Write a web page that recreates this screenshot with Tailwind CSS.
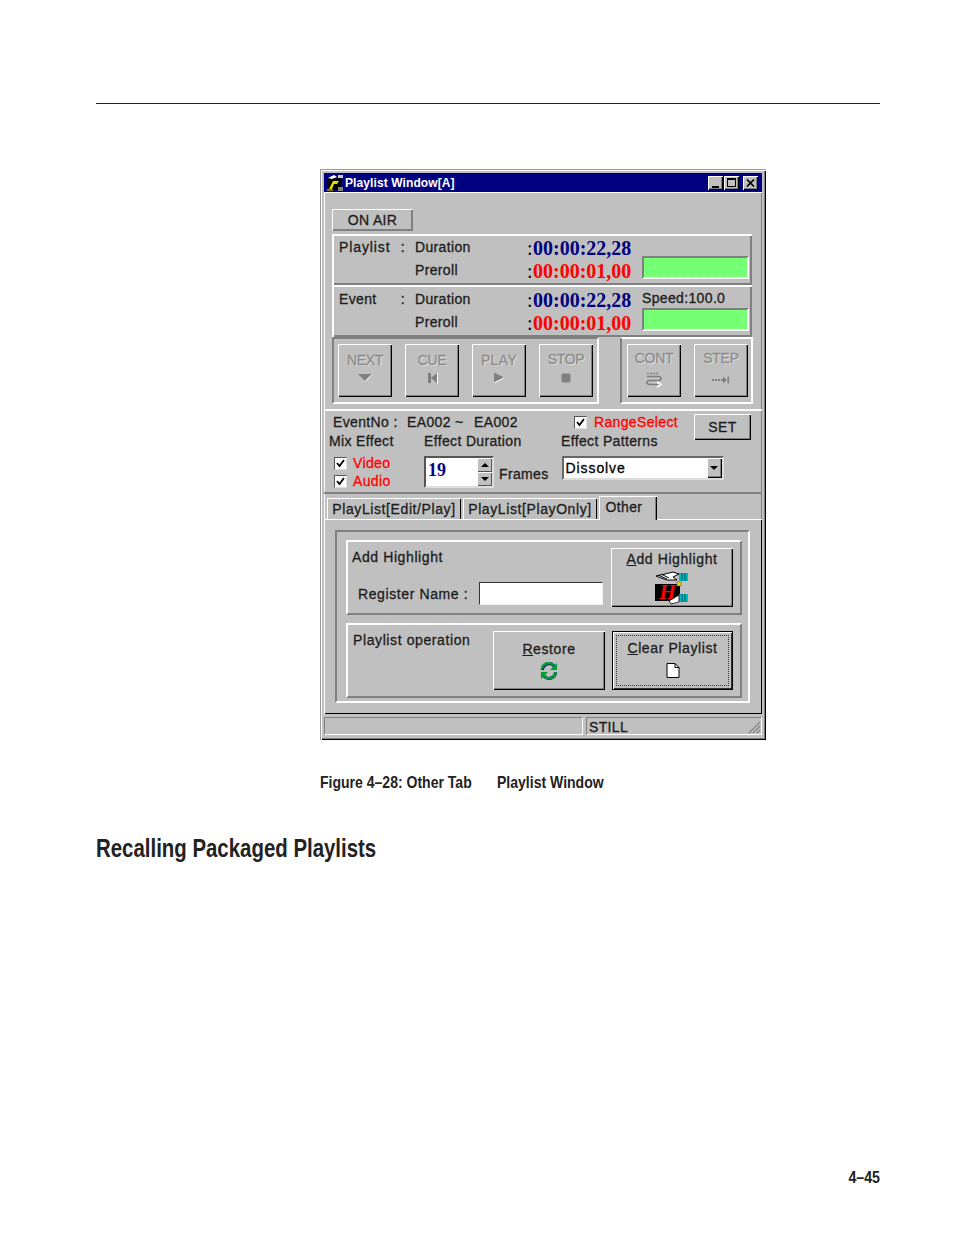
<!DOCTYPE html>
<html lang="en">
<head>
  <meta charset="UTF-8">
  <title>Playlist Window</title>
  <script src="https://cdn.jsdelivr.net/npm/@tailwindcss/browser@4"></script>
</head>
<body class="bg-white">
<div class="w-[954px] h-[1235px] bg-white flex flex-col font-['Liberation_Sans',sans-serif] text-black overflow-hidden">
  <div class="ml-[96px] mt-[103px] w-[784px] h-px bg-[#222]"></div>

  <!-- window -->
  <div class="ml-[320px] mt-[65px] w-[446px] h-[571px] p-[4px] flex flex-col bg-[#c0c0c0] text-[14px] leading-none tracking-[0.35px] text-[#1c1c1c] [-webkit-text-stroke:0.3px] shadow-[inset_1px_1px_0_#999,inset_2px_2px_0_#fff,inset_-1px_-1px_0_#000,inset_-2px_-2px_0_#808080]">
    <!-- title bar -->
    <div class="h-[19px] shrink-0 bg-[#000080] flex items-center pl-[2px] pr-[4px] text-white">
      <svg width="18" height="18" viewBox="0 0 18 18" class="shrink-0">
        <rect x="1" y="4" width="14" height="12" fill="#000"/>
        <path d="M3 15 L7 7 L13 7 L11 10 L8 10 L6 15Z" fill="#e8d800"/>
        <path d="M2 4 L8 1 L11 3 L6 5Z" fill="#fff"/>
        <rect x="12" y="1" width="5" height="3" fill="#d0d0d0"/>
        <rect x="12" y="13" width="5" height="4" fill="#808080"/>
        <rect x="1" y="15" width="6" height="2" fill="#808000"/>
      </svg>
      <span class="ml-[1px] text-[12px] font-bold tracking-[0.1px] [-webkit-text-stroke:0]">Playlist Window[A]</span>
      <div class="ml-auto flex items-center">
        <div class="mr-[1px] w-[15px] h-[14px] bg-[#c0c0c0] flex items-end justify-center pb-[2px] shadow-[inset_1px_1px_0_#fff,inset_-1px_-1px_0_#000,inset_-2px_-2px_0_#808080]"><div class="w-[7px] h-[2px] bg-black"></div></div>
        <div class="w-[15px] h-[14px] bg-[#c0c0c0] flex items-center justify-center shadow-[inset_1px_1px_0_#fff,inset_-1px_-1px_0_#000,inset_-2px_-2px_0_#808080]"><div class="w-[9px] h-[9px] border border-black border-t-2"></div></div>
        <div class="ml-[4px] w-[15px] h-[14px] bg-[#c0c0c0] flex items-center justify-center shadow-[inset_1px_1px_0_#fff,inset_-1px_-1px_0_#000,inset_-2px_-2px_0_#808080]">
          <svg width="9" height="8" viewBox="0 0 9 8"><path d="M1 0.5 L8 7.5 M8 0.5 L1 7.5" stroke="#000" stroke-width="1.7"/></svg>
        </div>
      </div>
    </div>

    <!-- client area -->
    <div class="h-[522px] shrink-0 flex flex-col shadow-[inset_1px_1px_0_#fff,inset_-1px_0_0_#808080]">
      <div class="px-[8px] pt-[17px] flex flex-col">
        <div class="w-[81px] h-[22px] flex items-center justify-center shadow-[inset_1px_1px_0_#fff,inset_-1px_-1px_0_#808080,inset_-2px_-2px_0_#808080]">ON AIR</div>

        <!-- playlist times -->
        <div class="mt-[3px] w-[420px] h-[51px] pl-[5px] grid grid-cols-[76px_112px_115px_1fr] grid-rows-[22px_23px] items-center border-t-2 border-l-2 border-t-white border-l-white shadow-[inset_-2px_-2px_0_#808080]">
          <div class="flex justify-between pr-[10px]"><span class="tracking-[0.9px]">Playlist</span><span>:</span></div>
          <span>Duration</span>
          <span class="pt-[2px] font-['Liberation_Serif',serif] font-bold text-[20px] tracking-normal [-webkit-text-stroke:0] flex"><span class="w-[6px] text-black font-normal">:</span><span class="text-[#000080]">00:00:22,28</span></span>
          <div class="row-span-2 self-stretch flex flex-col justify-end pb-[2px] pr-[3px]">
            <div class="h-[23px] bg-[repeating-conic-gradient(#90ff90_0_25%,#6cfc6c_0_50%)] bg-[length:2px_2px] border-2 border-t-[#808080] border-l-[#808080] border-r-white border-b-white"></div>
          </div>
          <span></span>
          <span>Preroll</span>
          <span class="pt-[2px] font-['Liberation_Serif',serif] font-bold text-[20px] tracking-normal [-webkit-text-stroke:0] flex"><span class="w-[6px] text-black font-normal">:</span><span class="text-[#ff0000]">00:00:01,00</span></span>
        </div>

        <!-- event times -->
        <div class="w-[420px] h-[52px] pl-[5px] grid grid-cols-[76px_112px_115px_1fr] grid-rows-[23px_23px] items-center border-t-2 border-l-2 border-t-white border-l-white shadow-[inset_-2px_-2px_0_#808080]">
          <div class="flex justify-between pr-[10px]"><span>Event</span><span>:</span></div>
          <span>Duration</span>
          <span class="pt-[2px] font-['Liberation_Serif',serif] font-bold text-[20px] tracking-normal [-webkit-text-stroke:0] flex"><span class="w-[6px] text-black font-normal">:</span><span class="text-[#000080]">00:00:22,28</span></span>
          <div class="row-span-2 self-stretch flex flex-col justify-end pb-[2px] pr-[3px]">
            <span class="mb-[3px]">Speed:100.0</span>
            <div class="h-[23px] bg-[repeating-conic-gradient(#90ff90_0_25%,#6cfc6c_0_50%)] bg-[length:2px_2px] border-2 border-t-[#808080] border-l-[#808080] border-r-white border-b-white"></div>
          </div>
          <span></span>
          <span>Preroll</span>
          <span class="pt-[2px] font-['Liberation_Serif',serif] font-bold text-[20px] tracking-normal [-webkit-text-stroke:0] flex"><span class="w-[6px] text-black font-normal">:</span><span class="text-[#ff0000]">00:00:01,00</span></span>
        </div>

        <!-- transport buttons -->
        <div class="w-[421px] h-[67px] flex justify-between text-[#8c8c8c] tracking-[-0.3px] [text-shadow:1px_1px_0_#e4e4e4]">
          <div class="w-[267px] h-[67px] pl-[4px] pt-[5px] flex gap-[13px] border-2 border-t-[#808080] border-l-[#808080] border-r-white border-b-white">
            <div class="w-[54px] h-[53px] flex flex-col items-center pt-[9px] gap-[6px] shadow-[inset_1px_1px_0_#fff,inset_-1px_-1px_0_#000,inset_-2px_-2px_0_#808080]">
              <span>NEXT</span>
              <svg width="16" height="9" viewBox="0 0 16 9"><path d="M1 1 H15 L8 8Z" fill="#808080"/><path d="M15 1.5 L8 8.5" stroke="#fff"/></svg>
            </div>
            <div class="w-[54px] h-[53px] flex flex-col items-center pt-[9px] gap-[5px] shadow-[inset_1px_1px_0_#fff,inset_-1px_-1px_0_#000,inset_-2px_-2px_0_#808080]">
              <span>CUE</span>
              <svg width="11" height="12" viewBox="0 0 11 12"><path d="M1 1 H4 V11 H1Z M10 1 V11 L4 6Z" fill="#808080"/><path d="M10.500 1 V11.500" stroke="#fff"/></svg>
            </div>
            <div class="w-[54px] h-[53px] flex flex-col items-center pt-[9px] gap-[5px] shadow-[inset_1px_1px_0_#fff,inset_-1px_-1px_0_#000,inset_-2px_-2px_0_#808080]">
              <span class="tracking-[0.35px]">PLAY</span>
              <svg width="12" height="11" viewBox="0 0 12 11"><path d="M1 0.5 L11 5.5 L1 10.5Z" fill="#808080"/><path d="M11 6 L1 11" stroke="#fff"/></svg>
            </div>
            <div class="w-[54px] h-[53px] flex flex-col items-center pt-[8px] gap-[7px] shadow-[inset_1px_1px_0_#fff,inset_-1px_-1px_0_#000,inset_-2px_-2px_0_#808080]">
              <span>STOP</span>
              <svg width="10" height="10" viewBox="0 0 10 10"><rect x="0.5" y="0.5" width="9" height="9" rx="1.5" fill="#808080"/></svg>
            </div>
          </div>
          <div class="w-[133px] h-[67px] pl-[5px] pt-[5px] flex gap-[13px] border-2 border-t-white border-l-[#808080] border-r-white border-b-white">
            <div class="w-[54px] h-[53px] flex flex-col items-center pt-[7px] gap-[6px] shadow-[inset_1px_1px_0_#fff,inset_-1px_-1px_0_#000,inset_-2px_-2px_0_#808080]">
              <span>CONT</span>
              <svg width="18" height="17" viewBox="0 0 18 17" fill="none" stroke="#808080" stroke-width="1.6"><path d="M2 2.500 H14" stroke-dasharray="2 1"/><path d="M2 5.500 H13 Q16 5.500 16 7.500 Q16 9.500 13 9.500 H5 Q2 9.500 2 11.500 Q2 13.500 5 13.500 H15"/><path d="M12 11 L16 13.500 L12 16" stroke="#fff"/></svg>
            </div>
            <div class="w-[54px] h-[53px] flex flex-col items-center pt-[7px] gap-[11px] shadow-[inset_1px_1px_0_#fff,inset_-1px_-1px_0_#000,inset_-2px_-2px_0_#808080]">
              <span>STEP</span>
              <svg width="18" height="8" viewBox="0 0 18 8"><path d="M0 3 H2 V5 H0Z M3 3 H5 V5 H3Z M6 3 H8 V5 H6Z M9 3 H11 V0.500 L15 4 L11 7.500 V5 H9Z M15.500 0.500 H17 V7.500 H15.500Z" fill="#808080"/></svg>
            </div>
          </div>
        </div>
      </div>

      <!-- effect section -->
      <div class="mt-[5px] h-[85px] flex flex-col shrink-0 border-t-2 border-t-white border-b-2 border-b-[#808080]">
        <div class="flex">
          <div class="w-[370px] flex flex-col">
            <div class="h-[21px] flex items-center pt-[1px]">
              <span class="ml-[9px] w-[74px]">EventNo :</span>
              <span class="w-[67px]">EA002 ~</span>
              <span class="w-[100px]">EA002</span>
              <div class="w-[13px] h-[13px] bg-white flex items-center justify-center border border-t-[#555] border-l-[#555] border-r-[#ddd] border-b-[#ddd]">
                <svg width="9" height="9" viewBox="0 0 9 9" fill="none" stroke="#000" stroke-width="1.8"><path d="M1 4 L3.500 7 L8 1"/></svg>
              </div>
              <span class="ml-[7px] text-[#ff0000]">RangeSelect</span>
            </div>
            <div class="h-[18px] flex items-center">
              <span class="ml-[5px] w-[95px]">Mix Effect</span>
              <span class="w-[137px]">Effect Duration</span>
              <span>Effect Patterns</span>
            </div>
          </div>
          <div class="mt-[3px] w-[57px] h-[26px] flex items-center justify-center shadow-[inset_1px_1px_0_#fff,inset_-1px_-1px_0_#000,inset_-2px_-2px_0_#808080]">SET</div>
        </div>
        <div class="mt-[6px] flex">
          <div class="ml-[10px] w-[90px] flex flex-col gap-[4px]">
            <div class="h-[14px] flex items-center gap-[6px] text-[#ff0000]">
              <div class="w-[13px] h-[13px] bg-white flex items-center justify-center border border-t-[#555] border-l-[#555] border-r-[#ddd] border-b-[#ddd]">
                <svg width="9" height="9" viewBox="0 0 9 9" fill="none" stroke="#000" stroke-width="1.8"><path d="M1 4 L3.500 7 L8 1"/></svg>
              </div>
              <span>Video</span>
            </div>
            <div class="h-[14px] flex items-center gap-[6px] text-[#ff0000]">
              <div class="w-[13px] h-[13px] bg-white flex items-center justify-center border border-t-[#555] border-l-[#555] border-r-[#ddd] border-b-[#ddd]">
                <svg width="9" height="9" viewBox="0 0 9 9" fill="none" stroke="#000" stroke-width="1.8"><path d="M1 4 L3.500 7 L8 1"/></svg>
              </div>
              <span>Audio</span>
            </div>
          </div>
          <div class="w-[70px] h-[32px] bg-white flex justify-between border-2 border-t-[#555] border-l-[#555] border-r-[#ddd] border-b-[#ddd]">
            <span class="ml-[2px] mt-[3px] font-['Liberation_Serif',serif] font-bold text-[18px] tracking-normal text-[#000080] [-webkit-text-stroke:0]">19</span>
            <div class="w-[15px] flex flex-col">
              <div class="h-[14px] bg-[#c0c0c0] flex items-center justify-center shadow-[inset_1px_1px_0_#fff,inset_-1px_-1px_0_#555]"><div class="w-0 h-0 border-x-[4px] border-x-transparent border-b-[4px] border-b-black"></div></div>
              <div class="h-[14px] bg-[#c0c0c0] flex items-center justify-center shadow-[inset_1px_1px_0_#fff,inset_-1px_-1px_0_#555]"><div class="w-0 h-0 border-x-[4px] border-x-transparent border-t-[4px] border-t-black"></div></div>
            </div>
          </div>
          <span class="ml-[5px] mt-[11px]">Frames</span>
          <div class="ml-[13px] w-[162px] h-[24px] bg-white flex justify-between items-stretch border-2 border-t-[#666] border-l-[#666] border-r-[#ddd] border-b-[#ddd]">
            <span class="ml-[2px] mt-[3px] text-black tracking-[0.9px]">Dissolve</span>
            <div class="w-[15px] bg-[#c0c0c0] flex items-center justify-center shadow-[inset_1px_1px_0_#fff,inset_-1px_-1px_0_#000,inset_-2px_-2px_0_#808080]"><div class="w-0 h-0 border-x-[4px] border-x-transparent border-t-[4px] border-t-black"></div></div>
          </div>
        </div>
      </div>

      <!-- tabs -->
      <div class="mt-[1px] ml-[3px] h-[24px] shrink-0 flex items-end gap-[2px] tracking-[0.6px]">
        <div class="w-[134px] h-[21px] flex items-center justify-center pt-[1px] shadow-[inset_1px_1px_0_#fff,inset_-1px_0_0_#000]">PlayList[Edit/Play]</div>
        <div class="w-[134px] h-[21px] flex items-center justify-center pt-[1px] shadow-[inset_1px_1px_0_#fff,inset_-1px_0_0_#000]">PlayList[PlayOnly]</div>
        <div class="w-[58px] h-[24px] -mb-px relative flex items-center justify-center pb-[3px] pr-[8px] bg-[#c0c0c0] tracking-[0.35px] shadow-[inset_1px_1px_0_#fff,inset_-1px_0_0_#000,inset_-2px_0_0_#808080]">Other</div>
      </div>

      <!-- tab page -->
      <div class="flex-1 pl-[10px] pt-[10px] tracking-[0.6px] border-t border-t-white border-l border-l-white shadow-[inset_-1px_0_0_#000,inset_0_-1px_0_#000]">
        <div class="w-[415px] h-[173px] pl-[9px] pt-[8px] flex flex-col gap-[8px] border-2 border-t-[#808080] border-l-[#808080] border-r-white border-b-white">
          <div class="w-[396px] h-[75px] flex border-2 border-t-white border-l-white border-r-[#808080] border-b-[#808080]">
            <div class="w-[263px] flex flex-col">
              <span class="ml-[4px] mt-[8px]">Add Highlight</span>
              <div class="mt-[18px] flex items-center">
                <span class="ml-[10px] w-[121px]">Register Name :</span>
                <div class="w-[124px] h-[23px] bg-white border border-t-[#333] border-l-[#333] border-r-[#eee] border-b-[#eee]"></div>
              </div>
            </div>
            <div class="mt-[6px] w-[122px] h-[59px] flex flex-col items-center pt-[4px] shadow-[inset_1px_1px_0_#fff,inset_-1px_-1px_0_#000,inset_-2px_-2px_0_#808080]">
              <span><u>A</u>dd Highlight</span>
              <svg width="34" height="34" viewBox="0 0 34 34" class="mt-[5px] [-webkit-text-stroke:0]">
                <path d="M1 5 L10 3 L18 1 L24 3 L18 6 L22 9 L12 9 L6 7Z" fill="#fff" stroke="#000" stroke-width="1"/>
                <path d="M3 4 L12 8 M6 3 L14 7" stroke="#000" stroke-width="1"/>
                <rect x="0" y="13" width="25" height="17" fill="#000"/>
                <rect x="22" y="11" width="4" height="4" fill="#e8e000" stroke="#444" stroke-width=".5"/>
                <path d="M24 2 H33 V10 H24Z M24 23 H33 V31 H24Z" fill="#00b8c0"/>
                <path d="M27 2 V10 M30 2 V10 M27 23 V31 M30 23 V31" stroke="#005058" stroke-width="1"/>
                <text x="4" y="28" font-family="Liberation Serif" font-weight="700" font-style="italic" font-size="22" fill="#ff0000">H</text>
                <path d="M14 30 L24 24 L24 31 L16 33Z" fill="#fff" stroke="#000" stroke-width=".8"/>
              </svg>
            </div>
          </div>
          <div class="w-[396px] h-[75px] flex border-2 border-t-white border-l-white border-r-[#808080] border-b-[#808080]">
            <span class="ml-[5px] mt-[8px] w-[140px]">Playlist operation</span>
            <div class="mt-[6px] w-[112px] h-[59px] flex flex-col items-center pt-[11px] gap-[6px] shadow-[inset_1px_1px_0_#fff,inset_-1px_-1px_0_#000,inset_-2px_-2px_0_#808080]">
              <span><u>R</u>estore</span>
              <svg width="18" height="18" viewBox="0 0 18 18" fill="none">
                <path d="M2.500 8 A6.500 6.500 0 0 1 14 4" stroke="#000080" stroke-width="3"/>
                <path d="M15.500 10 A6.500 6.500 0 0 1 4 14" stroke="#000080" stroke-width="3"/>
                <path d="M2 7.500 A6.500 6.500 0 0 1 13.500 3.500" stroke="#00a030" stroke-width="2.500"/>
                <path d="M15.500 10 A6.500 6.500 0 0 1 4 14" stroke="#00a030" stroke-width="2.500"/>
                <path d="M17 1 V8 H10Z M1 17 V10 H8Z" fill="#00a030"/>
              </svg>
            </div>
            <div class="ml-[7px] mt-[6px] w-[121px] h-[59px] p-[4px] shadow-[inset_0_0_0_1px_#000,inset_2px_2px_0_#fff,inset_-2px_-2px_0_#333]">
              <div class="h-full flex flex-col items-center pt-[5px] gap-[8px] border border-dotted border-[#333]">
                <span><u>C</u>lear Playlist</span>
                <svg width="14" height="15" viewBox="0 0 14 15"><path d="M1 .5 H9 L13 4.500 V14.500 H1Z" fill="#fff" stroke="#000"/><path d="M9 .5 V4.500 H13" fill="none" stroke="#000"/></svg>
              </div>
            </div>
          </div>
        </div>
      </div>
    </div>

    <!-- status bar -->
    <div class="mt-[3px] h-[18px] shrink-0 flex gap-[3px] mb-auto">
      <div class="w-[259px] border border-t-[#808080] border-l-[#808080] border-r-white border-b-white"></div>
      <div class="flex-1 flex items-center pl-[2px] pt-[2px] border border-t-[#808080] border-l-[#808080] border-r-white border-b-white justify-between">
        <span>STILL</span>
        <svg width="14" height="14" viewBox="0 0 14 14" fill="none" stroke="#808080" stroke-width="1.200"><path d="M13 2 L2 13 M13 6 L6 13 M13 10 L10 13"/></svg>
      </div>
    </div>
  </div>

  <!-- caption -->
  <div class="ml-[320px] mt-[34px] h-[18px] flex items-center font-bold text-[17px] text-[#222]">
    <span class="w-[177px] whitespace-nowrap origin-left scale-x-[0.825]">Figure 4–28: Other Tab</span>
    <span class="whitespace-nowrap origin-left scale-x-[0.825]">Playlist Window</span>
  </div>

  <h2 class="ml-[96px] mt-[40px] w-[400px] whitespace-nowrap origin-left scale-x-[0.785] font-bold text-[26px] leading-[32px] text-[#222]">Recalling Packaged Playlists</h2>

  <div class="mt-[305px] w-[880px] text-right origin-right scale-x-[0.886] font-bold text-[16px] leading-[18px] text-[#222]">4–45</div>
</div>
</body>
</html>
